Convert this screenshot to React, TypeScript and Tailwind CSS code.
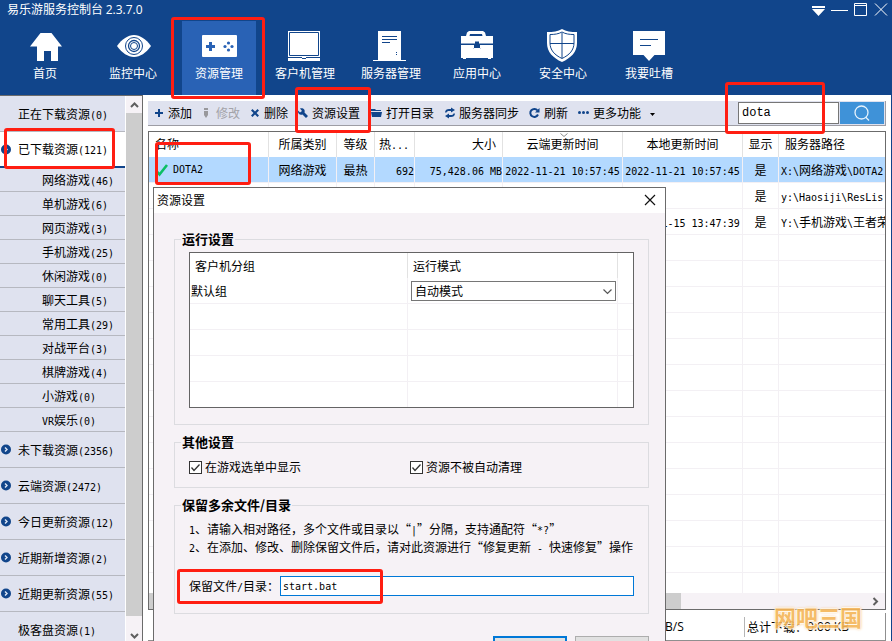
import { useState } from "react";
import type { ReactNode } from "react";

interface Category {
  label: string;
  count: number;
  arrow?: boolean;
}

interface Resource {
  name: string;
  kind: string;
  level: string;
  heat: string;
  size: string;
  cloudTime: string;
  localTime: string;
  visible: string;
  path: string;
}

const games: Category[] = [
  { label: "网络游戏", count: 46 },
  { label: "单机游戏", count: 6 },
  { label: "网页游戏", count: 3 },
  { label: "手机游戏", count: 25 },
  { label: "休闲游戏", count: 0 },
  { label: "聊天工具", count: 5 },
  { label: "常用工具", count: 29 },
  { label: "对战平台", count: 3 },
  { label: "棋牌游戏", count: 4 },
  { label: "小游戏", count: 0 },
  { label: "VR娱乐", count: 0 },
];

const categories: Category[] = [
  { label: "未下载资源", count: 2356, arrow: true },
  { label: "云端资源", count: 2472, arrow: true },
  { label: "今日更新资源", count: 12, arrow: true },
  { label: "近期新增资源", count: 2, arrow: true },
  { label: "近期更新资源", count: 55, arrow: true },
  { label: "极客盘资源", count: 1 },
];

const resources: Resource[] = [
  {
    name: "DOTA2",
    kind: "网络游戏",
    level: "最热",
    heat: "692",
    size: "75,428.06 MB",
    cloudTime: "2022-11-21 10:57:45",
    localTime: "2022-11-21 10:57:45",
    visible: "是",
    path: "X:\\网络游戏\\DOTA2",
  },
  {
    name: "",
    kind: "",
    level: "",
    heat: "",
    size: "",
    cloudTime: "",
    localTime: "",
    visible: "是",
    path: "y:\\Haosiji\\ResLis",
  },
  {
    name: "",
    kind: "",
    level: "",
    heat: "",
    size: "",
    cloudTime: "",
    localTime: "2022-11-15 13:47:39",
    visible: "是",
    path: "Y:\\手机游戏\\王者荣",
  },
];

const emptyRows = Array.from({ length: 16 }, (_, i) => i);

const columns = [
  { label: "名称", width: "w-[120px]", cell: "px-[6px] text-left" },
  { label: "所属类别", width: "w-[68px]", cell: "text-center" },
  { label: "等级", width: "w-[38px]", cell: "text-center" },
  { label: "热...", width: "w-[40px]", cell: "pl-1 text-left" },
  { label: "大小", width: "w-[88px]", cell: "pr-[6px] text-right" },
  { label: "云端更新时间", width: "w-[120px]", cell: "text-center" },
  { label: "本地更新时间", width: "w-[120px]", cell: "text-center" },
  { label: "显示", width: "w-[36px]", cell: "text-center" },
  { label: "服务器路径", width: "", cell: "pl-[6px] text-left" },
];

// Half-width runs are set smaller so that two of them take one CJK cell.
function Mixed({ text }: { text: string }) {
  return (
    <>
      {text.split(/([\x20-\x7e]+)/).map((part, i) =>
        i % 2 === 1 ? (
          <span
            key={i}
            className="whitespace-pre font-['DejaVu_Sans_Mono',monospace] text-[10px] leading-none"
          >
            {part}
          </span>
        ) : (
          part
        ),
      )}
    </>
  );
}

export default function App() {
  const [dialogOpen, setDialogOpen] = useState(true);

  return (
    <div className="relative flex h-screen flex-col overflow-hidden bg-white font-['Noto_Sans_CJK_SC',sans-serif] text-[12px] leading-[18px] text-black">
      <Header />
      <div className="flex min-h-0 flex-1">
        <Sidebar />
        <main className="flex min-w-0 flex-1 flex-col border-r border-[#11458b] px-[5px]">
          <Toolbar onSettings={() => setDialogOpen(true)} />
          <ResourcePanel />
          <footer className="mt-[3px] flex h-7 items-center border-r border-b border-[#8f8f8f]">
            <span className="flex-1 pl-[517px] font-['Open_Sans','Noto_Sans_CJK_SC',sans-serif]">
              B/S
            </span>
            <span className="flex h-5 w-[141px] items-center border-l border-[#b5b5b5] pl-[2px]">
              总计下载：
              <span className="font-['Open_Sans',sans-serif]">0.00 KB</span>
            </span>
          </footer>
        </main>
      </div>
      {dialogOpen && <SettingsDialog onClose={() => setDialogOpen(false)} />}
      <Highlights />
      <div className="pointer-events-none absolute right-[30px] bottom-[15px] z-30 text-[22px] leading-5 font-bold text-[#f5b557] opacity-90 [text-shadow:1px_0_#fff8e8,-1px_0_#fff8e8,0_1px_#fff8e8,0_-1px_#fff8e8,0_0_3px_#f39a2b]">
        网吧三国
      </div>
    </div>
  );
}

function Header() {
  return (
    <header className="flex h-[95px] shrink-0 flex-col bg-[#11458b] text-white">
      <div className="flex h-[21px] shrink-0 items-start justify-between pr-[3px] pl-[7px]">
        <h1 className="font-normal">
          易乐游服务控制台{" "}
          <span className="font-['Open_Sans',sans-serif]">2.3.7.0</span>
        </h1>
        <div className="flex gap-[5px] pt-[3px]">
          <button type="button" aria-label="菜单">
            <svg width="14" height="14" viewBox="0 0 14 14" fill="#fff">
              <path d="M0 3h13v2H0zM0 6h13L6.500 13z" />
            </svg>
          </button>
          <button type="button" aria-label="最小化">
            <svg width="18" height="14" viewBox="0 0 18 14" fill="#fff">
              <path d="M0 7h17v1H0z" />
            </svg>
          </button>
          <button type="button" aria-label="最大化">
            <svg width="14" height="14" viewBox="0 0 14 14" fill="none" stroke="#fff">
              <path d="M.5.500h12v12H.5zM.5 2.500h12" />
            </svg>
          </button>
          <button type="button" aria-label="关闭窗口">
            <svg width="16" height="14" viewBox="0 0 16 14" fill="none" stroke="#fff">
              <path d="m2 .5 12 12m0-12L2 12.500" />
            </svg>
          </button>
        </div>
      </div>
      <nav className="flex min-h-0 flex-1">
        <NavItem label="首页" first>
          <path d="M13.500 4h11L35 17.500h-4V32h-7V22h-7v10h-7V17.500H3z" />
        </NavItem>
        <NavItem label="监控中心">
          <path d="M2 17C7 10 13 6 19 6s12 4 17 11c-5 7-11 11-17 11S7 24 2 17z" />
          <g fill="none" stroke="#11458b">
            <circle cx="19" cy="17" r="8.500" />
            <circle cx="19" cy="17" r="5.500" strokeWidth="1.300" />
            <circle cx="19" cy="17" r="3.500" />
          </g>
        </NavItem>
        <NavItem label="资源管理" active>
          <rect x="1" y="6" width="35" height="22" rx="1" />
          <g fill="#2962b5">
            <path d="M8 13h3v3h3v3h-3v3H8v-3H5v-3h3z" />
            <circle cx="27.500" cy="14" r="1.600" />
            <circle cx="27.500" cy="21" r="1.600" />
            <circle cx="24" cy="17.500" r="1.600" />
            <circle cx="31" cy="17.500" r="1.600" />
          </g>
        </NavItem>
        <NavItem label="客户机管理">
          <path d="M1 2h32v30H1z" />
          <path d="M2.500 3.500h29v23h-29zM1 28.500h14m4 0h14M15 29.500h4" fill="none" stroke="#11458b" />
        </NavItem>
        <NavItem label="服务器管理">
          <path d="M5 2h23v29h5v1H0v-1h5z" />
          <path d="M9 7.500h15M9 10.500h15M9 13.500h8M23 23.500h1M23 25.500h1" stroke="#11458b" fill="none" />
        </NavItem>
        <NavItem label="应用中心">
          <path d="M7 7l1-3.500L10 2h14l2 1.500L27 7h7v7.500H2V7zm4-2L10.500 7h13L23 5z" fillRule="evenodd" />
          <path d="M2 16h12v4h8v-4h12v13h-2v1h-3v-1H7v1H4v-1H2z" />
          <path d="M14.500 16v3.500h7V16" fill="none" stroke="#fff" />
          <path d="M16 12.500h4v4.500h-4z" fill="#11458b" />
        </NavItem>
        <NavItem label="安全中心">
          <path d="M17 0c4 2.500 9 3 15 3v11c0 9-6 15-15 19C8 29 2 23 2 14V3c6 0 11-.5 15-3z" />
          <path d="M17 3c3.500 2 7.500 2.500 12 2.500V14c0 7-4.500 12-12 15.500C9.500 26 5 21 5 14V5.500C9.500 5.500 13.500 5 17 3zM17 4v25M5 14.500h24" fill="none" stroke="#11458b" />
        </NavItem>
        <NavItem label="我要吐槽">
          <path d="M2 2h32v24H23.500L18 32l-5.500-6H2z" />
          <path d="M9 10.500h18M9 16.500h11" stroke="#11458b" fill="none" />
        </NavItem>
      </nav>
    </header>
  );
}

function NavItem({
  label,
  active,
  first,
  children,
}: {
  label: string;
  active?: boolean;
  first?: boolean;
  children: ReactNode;
}) {
  return (
    <button
      type="button"
      className={`flex shrink-0 justify-center ${first ? "w-[90px]" : "w-[86px]"}`}
    >
      <span
        className={`flex h-full w-[74px] flex-col items-center pt-2 ${active ? "bg-[#2962b5]" : ""}`}
      >
        <svg width="36" height="34" viewBox="0 0 36 34" fill="#fff" aria-hidden>
          {children}
        </svg>
        <span className="mt-px whitespace-nowrap">{label}</span>
      </span>
    </button>
  );
}

function Sidebar() {
  return (
    <aside className="flex w-[143px] shrink-0 overflow-hidden border-t border-r border-[#6b6b6b]">
      <ul className="w-[125px] shrink-0">
        <SideItem item={{ label: "正在下载资源", count: 0 }} />
        <li className="h-9 border-b-2 border-[#11458b] bg-white">
          <button type="button" className="flex h-full w-full items-center gap-[6px] pl-px">
            <Bullet />
            <span>
              <Mixed text="已下载资源(121)" />
            </span>
          </button>
        </li>
        {games.map((g) => (
          <li key={g.label} className="h-6 border-b border-[#b6b8c0] bg-[#dfe2ef]">
            <button type="button" className="h-full w-full pl-[42px] text-left">
              <Mixed text={`${g.label}(${g.count})`} />
            </button>
          </li>
        ))}
        {categories.map((c) => (
          <SideItem key={c.label} item={c} />
        ))}
      </ul>
      <div className="ml-px flex w-4 flex-col items-center bg-[#f6f2f6]">
        <svg width="15" height="17" viewBox="0 0 15 17" className="shrink-0" aria-hidden>
          <path d="m4 11 3.500-3.500L11 11" fill="none" stroke="#5f5f5f" strokeWidth="2" />
        </svg>
        <div className="w-full flex-1 bg-[#cdcdcd]" />
        <svg width="15" height="25" viewBox="0 0 15 25" className="shrink-0" aria-hidden>
          <path d="m4 18 3.500 3.500L11 18" fill="none" stroke="#5f5f5f" strokeWidth="2" />
        </svg>
      </div>
    </aside>
  );
}

function SideItem({ item }: { item: Category }) {
  return (
    <li className="h-9 border-b border-[#b6b8c0] bg-[#dfe2ef]">
      <button type="button" className="flex h-full w-full items-center gap-[6px] pl-px">
        {item.arrow ? <Bullet /> : <span className="w-[11px]" />}
        <span>
          <Mixed text={`${item.label}(${item.count})`} />
        </span>
      </button>
    </li>
  );
}

function Bullet() {
  return (
    <svg width="11" height="11" viewBox="0 0 11 11" aria-hidden>
      <circle cx="5" cy="5.500" r="5" fill="#11458b" />
      <path d="m4 3.500 2 2-2 2" fill="none" stroke="#dfe8f7" strokeWidth="1.400" />
    </svg>
  );
}

function ToolButton({
  label,
  disabled,
  onClick,
  children,
}: {
  label: string;
  disabled?: boolean;
  onClick?: () => void;
  children: ReactNode;
}) {
  return (
    <button
      type="button"
      disabled={disabled}
      onClick={onClick}
      className="flex items-center gap-[3px] whitespace-nowrap disabled:text-[#a3a3a8]"
    >
      <svg width="12" height="12" viewBox="0 0 12 12" fill="#11458b" aria-hidden>
        {children}
      </svg>
      {label}
    </button>
  );
}

function Toolbar({ onSettings }: { onSettings: () => void }) {
  return (
    <div className="mt-[6px] flex h-[25px] shrink-0 items-center border-r border-b border-[#9d9da5] bg-[#dfe2ef] pl-[5px]">
      <div className="flex gap-[9px]">
        <ToolButton label="添加">
          <path d="M5 2h2v3h3v2H7v3H5V7H2V5h3z" />
        </ToolButton>
        <ToolButton label="修改" disabled>
          <path d="M3 1h4v2H3zM3 4h4v4l-2 3-2-3z" fill="#98989c" />
        </ToolButton>
        <ToolButton label="删除">
          <path d="m2 3.500 1.500-1.500L6 4.500 8.500 2 10 3.500 7.500 6 10 8.500 8.500 10 6 7.500 3.500 10 2 8.500 4.500 6z" />
        </ToolButton>
        <ToolButton label="资源设置" onClick={onSettings}>
          <path d="M3 1.500c3-1 5.500 1 4.500 4L11 9l-2 2-3.500-3.500C3 8.500.5 6.500 1 3.500l2 2L5 4z" />
        </ToolButton>
      </div>
      <div className="ml-[11px] flex gap-[10px]">
        <ToolButton label="打开目录">
          <path d="M0 2h4l1 1h5v1H0zM0 5h11l-1 5H1z" />
        </ToolButton>
        <ToolButton label="服务器同步">
          <path d="M1 5.500C1 3 3 2 5 2h2V.5L11 3 7 5.500V4H5C3.500 4 3 4.500 2.500 5.500zM11 6.500C11 9 9 10 7 10H5v1.500L1 9l4-2.500V8h2c1.500 0 2-.5 2.500-1.500z" />
        </ToolButton>
        <ToolButton label="刷新">
          <path d="M9 7.500A4 4 0 1 1 8.500 3.500" fill="none" stroke="#11458b" strokeWidth="2" />
          <path d="M10.500 1v4.500H6z" />
        </ToolButton>
        <ToolButton label="更多功能">
          <circle cx="1.500" cy="5.500" r="1.500" />
          <circle cx="5.500" cy="5.500" r="1.500" />
          <circle cx="9.500" cy="5.500" r="1.500" />
        </ToolButton>
      </div>
      <svg width="5" height="3" viewBox="0 0 5 3" className="mt-[2px] ml-[9px]" aria-hidden>
        <path d="M0 0h5L2.500 3z" />
      </svg>
      <form className="ml-auto flex gap-px pr-px" onSubmit={(e) => e.preventDefault()}>
        <input
          type="text"
          aria-label="搜索"
          defaultValue="dota"
          className="h-[22px] w-[101px] border border-[#767676] bg-white px-[3px] font-['Liberation_Mono',monospace] outline-none"
        />
        <button
          type="submit"
          aria-label="查找"
          className="flex h-[22px] w-11 items-center justify-center bg-[#3f92d8]"
        >
          <svg width="16" height="16" viewBox="0 0 16 16" fill="none" stroke="#e6f2fc" strokeWidth="1.300">
            <circle cx="7.500" cy="7.500" r="6.500" />
            <path d="m11.500 12 3.500 3.500" />
          </svg>
        </button>
      </form>
    </div>
  );
}

function ResourcePanel() {
  const line = "border-r border-b border-[#f3f0f4] p-0";
  return (
    <section className="mt-[5px] flex min-h-0 flex-1 flex-col border border-[#6b6b6b]">
      <div className="relative min-h-0 flex-1 overflow-hidden">
        <table className="w-full table-fixed border-separate border-spacing-0 whitespace-nowrap">
          <thead>
            <tr className="h-[25px]">
              {columns.map((c) => (
                <th
                  key={c.label}
                  className={`overflow-hidden border-r border-[#e2e2e2] pt-0 pb-[2px] font-normal last:border-r-0 ${c.width} ${c.cell}`}
                >
                  {c.label === "热..." ? <Mixed text="热..." /> : c.label}
                </th>
              ))}
            </tr>
          </thead>
          <tbody>
            {resources.map((r, i) => (
              <tr key={r.path} className={`h-[26px] ${i === 0 ? "bg-[#b3d9ff]" : ""}`}>
                <td className={line}>
                  {r.name && (
                    <span className="flex items-center gap-1 pl-[6px]">
                      <svg width="14" height="14" viewBox="0 0 14 14" fill="none" aria-hidden>
                        <path d="m1.500 8 3 3.500L12 2" stroke="#0bbf65" strokeWidth="2.600" />
                      </svg>
                      <Mixed text={r.name} />
                    </span>
                  )}
                </td>
                <td className={`${line} text-center`}>{r.kind}</td>
                <td className={`${line} text-center`}>{r.level}</td>
                <td className={`${line} text-right`}>
                  <Mixed text={r.heat} />
                </td>
                <td className={`${line} text-right`}>
                  <Mixed text={r.size} />
                </td>
                <td className={`${line} text-center`}>
                  <Mixed text={r.cloudTime} />
                </td>
                <td className={`${line} text-center`}>
                  <Mixed text={r.localTime} />
                </td>
                <td className={`${line} text-center`}>{r.visible}</td>
                <td className="overflow-hidden border-b border-[#f3f0f4] py-0 pr-0 pl-[2px]">
                  <Mixed text={r.path} />
                </td>
              </tr>
            ))}
            {emptyRows.map((n) => (
              <tr key={n} className="h-[26px]">
                {columns.map((c) => (
                  <td key={c.label} className={`${line} last:border-r-0`} />
                ))}
              </tr>
            ))}
          </tbody>
        </table>
        <svg width="8" height="5" viewBox="0 0 8 5" className="absolute top-px left-[411px]" aria-hidden>
          <path d="m.5.500 3.500 3 3.500-3" fill="none" stroke="#8a8a8a" />
        </svg>
      </div>
      <div className="flex h-4 shrink-0 items-center justify-between bg-[#f6f2f6]">
        <div className="h-full w-[532px] bg-[#cdcdcd]" />
        <svg width="9" height="9" viewBox="0 0 9 9" className="mr-[4px]" aria-hidden>
          <path d="m1.500 1 3.500 3.500L1.500 8" fill="none" stroke="#5f5f5f" strokeWidth="2" />
        </svg>
      </div>
    </section>
  );
}

function SettingsDialog({ onClose }: { onClose: () => void }) {
  return (
    <div
      role="dialog"
      aria-label="资源设置"
      className="absolute top-[187px] left-[153px] z-10 w-[513px] border border-[#6b6b6b] bg-[#f6f2f6]"
    >
      <div className="flex h-[25px] items-center justify-between bg-white pr-[9px] pb-[2px] pl-[3px]">
        <h2>资源设置</h2>
        <button type="button" aria-label="关闭" onClick={onClose}>
          <svg width="12" height="12" viewBox="0 0 12 12" fill="none" stroke="#111" strokeWidth="1.200">
            <path d="m1 1 10 10M11 1 1 11" />
          </svg>
        </button>
      </div>
      <div className="flex flex-col gap-2 pt-[17px] pr-4 pl-5">
        <Group title="运行设置">
          <div className="mt-1 mb-4 h-[156px] overflow-hidden border border-[#646464] bg-white">
            <table className="w-full table-fixed border-separate border-spacing-0">
              <thead>
                <tr className="h-[25px] text-left">
                  <th className="w-[218px] border-r border-[#e2e2e2] py-0 pl-[5px] font-normal">
                    客户机分组
                  </th>
                  <th className="w-[210px] border-r border-[#e2e2e2] py-0 pl-[5px] font-normal">
                    <label htmlFor="run-mode">运行模式</label>
                  </th>
                  <th className="p-0" />
                </tr>
              </thead>
              <tbody>
                <tr className="h-[26px]">
                  <td className="border-r border-b border-[#f3f0f4] py-0 pl-px">默认组</td>
                  <td className="border-r border-b border-[#f3f0f4] py-0 pr-px pl-[3px]">
                    <div className="relative">
                      <select
                        id="run-mode"
                        className="block h-5 w-full appearance-none border border-[#767676] bg-white pl-[3px] leading-[18px]"
                      >
                        <option>自动模式</option>
                      </select>
                      <svg
                        width="9"
                        height="6"
                        viewBox="0 0 9 6"
                        className="pointer-events-none absolute top-2 right-1"
                        aria-hidden
                      >
                        <path d="m.5.500 4 4 4-4" fill="none" stroke="#555" strokeWidth="1.200" />
                      </svg>
                    </div>
                  </td>
                  <td className="border-b border-[#f3f0f4] p-0" />
                </tr>
                {[1, 2, 3, 4].map((n) => (
                  <tr key={n} className="h-[26px]">
                    <td className="border-r border-b border-[#f3f0f4] p-0" />
                    <td className="border-r border-b border-[#f3f0f4] p-0" />
                    <td className="border-b border-[#f3f0f4] p-0" />
                  </tr>
                ))}
              </tbody>
            </table>
          </div>
        </Group>

        <Group title="其他设置">
          <div className="mt-[6px] mb-[10px] flex h-5">
            <Check label="在游戏选单中显示" />
            <Check label="资源不被自动清理" />
          </div>
        </Group>

        <Group title="保留多余文件/目录">
          <div className="mt-[6px] whitespace-nowrap">
            <p>
              <Mixed text="1、请输入相对路径，多个文件或目录以“|”分隔，支持通配符“*?”" />
            </p>
            <p>
              <Mixed text="2、在添加、修改、删除保留文件后，请对此资源进行“修复更新 - 快速修复”操作" />
            </p>
          </div>
          <div className="mt-5 mb-[17px] flex h-5 items-center">
            <label htmlFor="keep-files" className="w-[91px] shrink-0 whitespace-nowrap">
              <Mixed text="保留文件/目录：" />
            </label>
            <input
              id="keep-files"
              type="text"
              defaultValue="start.bat"
              className="h-5 min-w-0 flex-1 border border-[#0078d7] bg-white px-[2px] font-['DejaVu_Sans_Mono',monospace] text-[10px] outline-none"
            />
          </div>
        </Group>
      </div>
      <div className="mt-[22px] mr-4 mb-3 flex justify-end gap-2">
        <button
          type="button"
          aria-label="确定"
          onClick={onClose}
          className="h-6 w-[74px] border-2 border-[#0078d7] bg-[#e1e1e1]"
        />
        <button
          type="button"
          aria-label="取消"
          onClick={onClose}
          className="h-6 w-[74px] border border-[#adadad] bg-[#e1e1e1]"
        />
      </div>
    </div>
  );
}

function Group({ title, children }: { title: string; children: ReactNode }) {
  return (
    <fieldset className="min-w-0 border border-[#dcdce0] px-[14px]">
      <legend className="-ml-2 px-px text-[13px] leading-[18px] font-bold">{title}</legend>
      {children}
    </fieldset>
  );
}

function Check({ label }: { label: string }) {
  return (
    <label className="flex w-[221px] items-center gap-[3px]">
      <span className="relative flex">
        <input
          type="checkbox"
          defaultChecked
          className="peer h-[13px] w-[13px] appearance-none border border-[#333] bg-white"
        />
        <svg
          width="13"
          height="13"
          viewBox="0 0 13 13"
          className="pointer-events-none absolute inset-0 hidden peer-checked:block"
          aria-hidden
        >
          <path d="m2.500 6.500 2.500 3 5.500-6" fill="none" stroke="#333" strokeWidth="1.300" />
        </svg>
      </span>
      {label}
    </label>
  );
}

// Red frames that point out the steps of the guide.
function Highlights() {
  const frame = "absolute rounded-[3px] border-3 border-[#ff1e12]";
  return (
    <div className="pointer-events-none absolute inset-0 z-20" aria-hidden>
      <div className={`${frame} top-[17px] left-[171px] h-[82px] w-[94px]`} />
      <div className={`${frame} top-[87px] left-[295px] h-[46px] w-[76px]`} />
      <div className={`${frame} top-[128px] left-[4px] h-[41px] w-[111px]`} />
      <div className={`${frame} top-[142px] left-[155px] h-[43px] w-[96px]`} />
      <div className={`${frame} top-[82px] left-[725px] h-[52px] w-[100px]`} />
      <div className={`${frame} top-[569px] left-[177px] h-[35px] w-[206px]`} />
    </div>
  );
}
